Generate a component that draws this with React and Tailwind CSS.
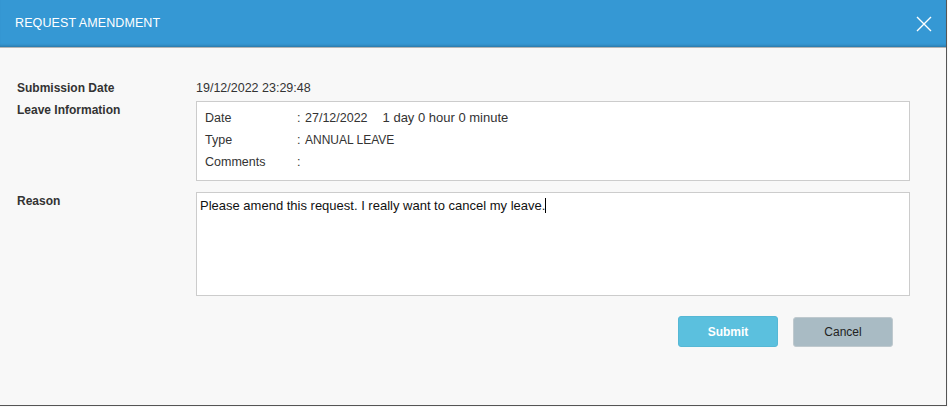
import React from 'react';

// Request amendment modal
const LeaveRow = ({ label, children }) => (
    <div className="flex h-[22px] leading-[22px]">
        <span className="w-[92px]">{label}</span>
        <span className="w-[8px]">:</span>
        <span>{children}</span>
    </div>
);

const App = () => {
    return (
        <div className="w-[948px] h-[407px] bg-[#f8f8f8] text-[12px] text-[#333] font-['Liberation_Sans',Arial,sans-serif]">
            <div className="w-[947px] h-[406px] border-r border-b border-[#555] bg-[#f8f8f8] flex flex-col">
                {/* Header */}
                <div className="h-[48px] shrink-0 bg-[#3598d4] border-b border-[#b5b5b5] shadow-[inset_0_-3px_3px_-2px_rgba(0,0,0,0.25)] flex items-center justify-between pl-[15px] pr-[14px]">
                    <h1 className="text-white text-[12.5px] tracking-[0.1px]">REQUEST AMENDMENT</h1>
                    <svg width="16" height="16" viewBox="0 0 16 16" className="text-white">
                        <path d="M1 1 L15 15 M15 1 L1 15" stroke="currentColor" strokeWidth="1.4" fill="none" />
                    </svg>
                </div>

                {/* Body */}
                <div className="pl-[17px] pr-[36px] pt-[30px]">
                    <div className="flex h-[20px] items-center">
                        <span className="w-[179px] font-bold">Submission Date</span>
                        <span className="text-[12.5px]">19/12/2022 23:29:48</span>
                    </div>
                    <div className="flex mt-[3px]">
                        <span className="w-[179px] font-bold leading-[18px]">Leave Information</span>
                        <div className="flex-1 h-[80px] bg-white border border-[#ccc] pl-[8px] pt-[5px] pb-[7px] text-[12.5px]">
                            <LeaveRow label="Date">
                                27/12/2022<span className="ml-[15px] text-[13px]">1 day 0 hour 0 minute</span>
                            </LeaveRow>
                            <LeaveRow label="Type"><span className="text-[12px]">ANNUAL LEAVE</span></LeaveRow>
                            <LeaveRow label="Comments"></LeaveRow>
                        </div>
                    </div>
                    <div className="flex mt-[11px]">
                        <span className="w-[179px] font-bold leading-[18px]">Reason</span>
                        <div className="flex-1 h-[104px] bg-white border border-[#ccc] px-[3px] pt-[4px] leading-[17px] text-[13px] text-[#111]">
                            Please amend this request. I really want to cancel my leave.
                            <span className="inline-block w-px h-[15px] bg-black align-middle -mt-[2px]"></span>
                        </div>
                    </div>
                    <div className="flex justify-end gap-[15px] pr-[17px] mt-[20px]">
                        <button className="w-[100px] h-[31px] rounded-[3px] bg-[#5bc0de] border border-[#56b8d5] text-white font-bold">
                            Submit
                        </button>
                        <button className="w-[100px] h-[30px] mt-px rounded-[3px] bg-[#a9bbc4] border border-[#bfc9ce] text-[#222]">
                            Cancel
                        </button>
                    </div>
                </div>
            </div>
        </div>
    );
};

export default App;
